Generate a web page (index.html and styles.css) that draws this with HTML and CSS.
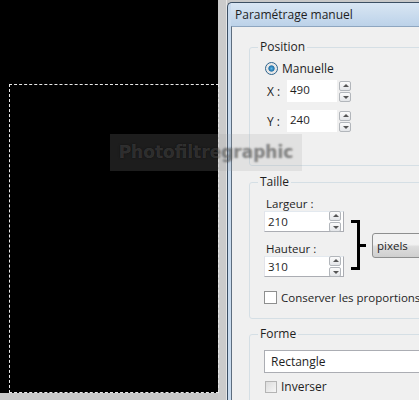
FILE: index.html
```html
<!DOCTYPE html>
<html lang="fr">
<head>
    <meta charset="UTF-8">
    <meta name="viewport" content="width=device-width, initial-scale=1.0">
    <title>Paramétrage manuel</title>
    <link rel="stylesheet" href="styles.css">
</head>
<body>
    <div class="workspace">
        <div class="canvas">
            <div class="selection"></div>
        </div>
        <div class="canvas-edge"></div>
        <div class="dialog">
            <div class="title-bar">Paramétrage manuel</div>
            <div class="dialog-body">
                <div class="group group-position">
                    <span class="group-title">Position</span>
                    <label class="radio-row">
                        <span class="radio checked"></span>
                        <span>Manuelle</span>
                    </label>
                    <div class="coord-row">
                        <span class="coord-label">X :</span>
                        <div class="field coord-field">490</div>
                        <div class="spin spin-outside">
                            <span class="spin-btn up"></span>
                            <span class="spin-btn down"></span>
                        </div>
                    </div>
                    <div class="coord-row">
                        <span class="coord-label">Y :</span>
                        <div class="field coord-field">240</div>
                        <div class="spin spin-outside">
                            <span class="spin-btn up"></span>
                            <span class="spin-btn down"></span>
                        </div>
                    </div>
                    <span class="radio radio-far"></span>
                </div>

                <div class="group group-size">
                    <span class="group-title">Taille</span>
                    <div class="size-row">
                        <div class="size-fields">
                            <div class="size-label">Largeur :</div>
                            <div class="field size-field">
                                <span>210</span>
                                <div class="spin">
                                    <span class="spin-btn up"></span>
                                    <span class="spin-btn down"></span>
                                </div>
                            </div>
                            <div class="size-label size-label-second">Hauteur :</div>
                            <div class="field size-field">
                                <span>310</span>
                                <div class="spin">
                                    <span class="spin-btn up"></span>
                                    <span class="spin-btn down"></span>
                                </div>
                            </div>
                        </div>
                        <div class="bracket">
                            <span class="bracket-tick"></span>
                        </div>
                        <div class="unit-select">pixels</div>
                    </div>
                    <label class="check-row">
                        <span class="checkbox"></span>
                        <span>Conserver les proportions</span>
                    </label>
                </div>

                <div class="group group-shape">
                    <span class="group-title">Forme</span>
                    <div class="combo">Rectangle</div>
                    <label class="check-row check-row-small">
                        <span class="checkbox disabled"></span>
                        <span>Inverser</span>
                    </label>
                </div>
            </div>
        </div>
    </div>
    <div class="watermark">Photofiltregraphic</div>
</body>
</html>
```

FILE: styles.css
```css
body {
    margin: 0;
    width: 419px;
    height: 400px;
    overflow: hidden;
    background-color: #c8c8c8;
    font-family: "Open Sans", "Noto Sans", sans-serif;
    font-size: 11.5px;
    color: #1e1e1e;
    position: relative;
}
.workspace {
    display: flex;
    height: 400px;
}
.canvas {
    width: 218px;
    height: 393px;
    background-color: #000;
    position: relative;
    flex-shrink: 0;
}
.selection {
    position: absolute;
    left: 9px;
    top: 84px;
    width: 208px;
    height: 307px;
    border: 1px dashed #e8e8e8;
}
.canvas-edge {
    width: 8px;
    flex-shrink: 0;
    background-color: #cbcbcb;
    border-right: 1px solid #e4e4e4;
}
.dialog {
    flex: 1;
    margin-top: 2px;
    background-color: #c9dbee;
    border-left: 1px solid #3c4f63;
    border-top: 1px solid #3c4f63;
    border-top-left-radius: 5px;
    padding-left: 3px;
    display: flex;
    flex-direction: column;
    overflow: hidden;
}
.title-bar {
    height: 23px;
    line-height: 23px;
    padding-left: 4px;
    font-size: 12px;
    background: linear-gradient(#d9e6f3, #bcd2e9);
    white-space: nowrap;
}
.dialog-body {
    flex: 1;
    background-color: #f0f0f0;
    border-left: 1px solid #5d6d7e;
    border-top: 1px solid #8ea6c0;
    padding-left: 17px;
}
.group {
    position: relative;
    width: 260px;
    border: 1px solid #d5dfe5;
    border-radius: 3px;
    padding-left: 14px;
    box-sizing: border-box;
}
.group-title {
    position: absolute;
    left: 8px;
    top: -10px;
    padding: 0 2px;
    background-color: #f0f0f0;
    line-height: 18px;
    font-size: 12px;
}
.group-position {
    margin-top: 20px;
    height: 119px;
    padding-top: 13px;
}
.group-size {
    margin-top: 16px;
    height: 137px;
    padding-top: 12px;
}
.group-shape {
    margin-top: 15px;
    height: 80px;
    padding-top: 15px;
}
.radio-row {
    display: flex;
    align-items: center;
    gap: 4px;
    height: 14px;
    padding-left: 1px;
    font-size: 12px;
}
.radio {
    width: 11px;
    height: 11px;
    border-radius: 50%;
    border: 1px solid #8e8f8f;
    background: radial-gradient(circle, #f4f4f4 40%, #dcdcdc 100%);
    flex-shrink: 0;
}
.radio.checked {
    background: radial-gradient(circle, #5fb8e8 0, #1d6fa8 35%, #e4e4e4 45%, #f4f4f4 100%);
    border-color: #2c628b;
}
.radio-far {
    position: absolute;
    left: 170px;
    top: 14px;
}
.coord-row {
    display: flex;
    align-items: center;
    margin-top: 3px;
    height: 26px;
}
.coord-row + .coord-row {
    margin-top: 4px;
}
.coord-label {
    width: 20px;
    padding-left: 3px;
    font-size: 12px;
}
.field {
    background-color: #fff;
    border: 1px solid #abadb3;
    border-top-color: #e3e9ef;
    border-left-color: #e2e3ea;
    box-sizing: border-box;
    height: 22px;
    line-height: 20px;
    padding-left: 3px;
}
.coord-field {
    width: 50px;
    border: none;
}
.spin {
    display: flex;
    flex-direction: column;
    width: 12px;
    gap: 1px;
}
.spin-outside {
    margin-left: 2px;
}
.spin-btn {
    height: 8px;
    border: 1px solid #b2b6bb;
    border-radius: 2px;
    background: linear-gradient(#fbfbfb, #e3e5e8);
    position: relative;
}
.spin-btn::after {
    content: "";
    position: absolute;
    left: 3px;
    border-left: 3px solid transparent;
    border-right: 3px solid transparent;
}
.spin-btn.up::after {
    top: 2px;
    border-bottom: 3px solid #555;
}
.spin-btn.down::after {
    top: 3px;
    border-top: 3px solid #555;
}
.size-row {
    display: flex;
    align-items: flex-start;
}
.size-fields {
    width: 80px;
}
.size-label {
    padding-left: 2px;
    line-height: 17px;
    height: 17px;
}
.size-label-second {
    margin-top: 8px;
}
.size-field {
    display: flex;
    justify-content: space-between;
    align-items: center;
    width: 80px;
    height: 21px;
    margin-top: -1px;
    padding-right: 2px;
}
.size-field .spin {
    width: 12px;
}
.bracket {
    position: relative;
    width: 6px;
    height: 44px;
    margin-left: 7px;
    margin-top: 25px;
    border: 3px solid #000;
    border-left: none;
}
.bracket-tick {
    position: absolute;
    left: 6px;
    top: 21px;
    width: 9px;
    height: 3px;
    background-color: #000;
}
.unit-select {
    margin-left: 12px;
    margin-top: 38px;
    width: 80px;
    height: 25px;
    line-height: 23px;
    box-sizing: border-box;
    padding-left: 4px;
    border: 1px solid #8e8f8f;
    border-radius: 3px;
    background: linear-gradient(#f2f2f2 45%, #dddddd 55%, #cfcfcf);
}
.check-row {
    display: flex;
    align-items: center;
    gap: 4px;
    margin-top: 13px;
    white-space: nowrap;
}
.checkbox {
    width: 13px;
    height: 13px;
    box-sizing: border-box;
    border: 1px solid #8e8f8f;
    background-color: #fff;
    flex-shrink: 0;
}
.checkbox.disabled {
    width: 12px;
    height: 12px;
    border-color: #b4b4b4;
    background: linear-gradient(135deg, #dcdcdc, #f6f6f6);
}
.combo {
    width: 200px;
    height: 23px;
    line-height: 21px;
    box-sizing: border-box;
    padding-left: 6px;
    background-color: #fff;
    border: 1px solid #abadb3;
    font-size: 12px;
}
.check-row-small {
    margin-top: 5px;
    padding-left: 1px;
    font-size: 12px;
}
.watermark {
    position: absolute;
    left: 110px;
    top: 134px;
    width: 192px;
    height: 37px;
    line-height: 37px;
    text-align: center;
    background-color: rgba(160, 160, 160, 0.18);
    color: rgba(255, 255, 255, 0.14);
    font-family: "DejaVu Sans", sans-serif;
    font-weight: bold;
    font-size: 17px;
    text-shadow: 0 0 2px rgba(0, 0, 0, 0.5);
    white-space: nowrap;
}
```
